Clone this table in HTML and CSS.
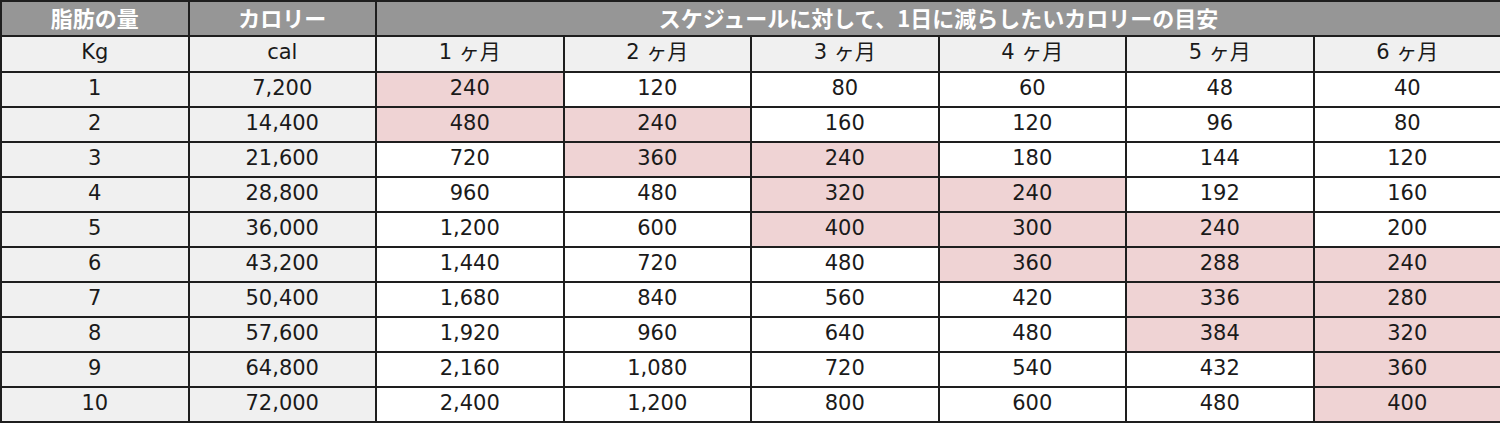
FILE: index.html
```html
<!DOCTYPE html>
<html lang="ja">
<head>
<meta charset="utf-8">
<link rel="stylesheet" href="styles.css">
</head>
<body>
<table class="plan">
  <colgroup>
    <col><col><col><col><col><col><col><col>
  </colgroup>
  <thead>
    <tr class="head">
      <th>脂肪の量</th>
      <th>カロリー</th>
      <th colspan="6">スケジュールに対して、1日に減らしたいカロリーの目安</th>
    </tr>
    <tr class="sub">
      <td>Kg</td><td>cal</td>
      <td>1 ヶ月</td><td>2 ヶ月</td><td>3 ヶ月</td><td>4 ヶ月</td><td>5 ヶ月</td><td>6 ヶ月</td>
    </tr>
  </thead>
  <tbody>
    <tr><td class="key">1</td><td class="key">7,200</td><td class="hi">240</td><td>120</td><td>80</td><td>60</td><td>48</td><td>40</td></tr>
    <tr><td class="key">2</td><td class="key">14,400</td><td class="hi">480</td><td class="hi">240</td><td>160</td><td>120</td><td>96</td><td>80</td></tr>
    <tr><td class="key">3</td><td class="key">21,600</td><td>720</td><td class="hi">360</td><td class="hi">240</td><td>180</td><td>144</td><td>120</td></tr>
    <tr><td class="key">4</td><td class="key">28,800</td><td>960</td><td>480</td><td class="hi">320</td><td class="hi">240</td><td>192</td><td>160</td></tr>
    <tr><td class="key">5</td><td class="key">36,000</td><td>1,200</td><td>600</td><td class="hi">400</td><td class="hi">300</td><td class="hi">240</td><td>200</td></tr>
    <tr><td class="key">6</td><td class="key">43,200</td><td>1,440</td><td>720</td><td>480</td><td class="hi">360</td><td class="hi">288</td><td class="hi">240</td></tr>
    <tr><td class="key">7</td><td class="key">50,400</td><td>1,680</td><td>840</td><td>560</td><td>420</td><td class="hi">336</td><td class="hi">280</td></tr>
    <tr><td class="key">8</td><td class="key">57,600</td><td>1,920</td><td>960</td><td>640</td><td>480</td><td class="hi">384</td><td class="hi">320</td></tr>
    <tr><td class="key">9</td><td class="key">64,800</td><td>2,160</td><td>1,080</td><td>720</td><td>540</td><td>432</td><td class="hi">360</td></tr>
    <tr><td class="key">10</td><td class="key">72,000</td><td>2,400</td><td>1,200</td><td>800</td><td>600</td><td>480</td><td class="hi">400</td></tr>
  </tbody>
</table>
</body>
</html>
```
FILE: styles.css
```css
html, body {
  margin: 0;
  padding: 0;
  background: #ffffff;
}

.plan {
  width: 1500px;
  border-collapse: collapse;
  table-layout: fixed;
  font-family: "DejaVu Sans", "Noto Sans CJK JP", sans-serif;
  font-size: 21px;
  color: #1a1a1a;
}

.plan col {
  width: 187.5px;
}

.plan th,
.plan td {
  border: 2px solid #1e1e1e;
  text-align: center;
  vertical-align: middle;
  padding: 0;
  line-height: 1;
}

.plan tr {
  height: 35px;
}

.plan .head {
  height: 35px;
}

.plan .head th {
  background: #969696;
  color: #ffffff;
  font-family: "Noto Sans CJK JP", sans-serif;
  font-weight: 700;
  font-size: 22px;
  padding-bottom: 3px;
}

.plan .sub {
  height: 36px;
}

.plan .sub td {
  background: #f0f0f0;
}

.plan td.key {
  background: #f0f0f0;
}

.plan td {
  padding-bottom: 3px;
}

.plan td.hi {
  background: #efd3d4;
}
```
